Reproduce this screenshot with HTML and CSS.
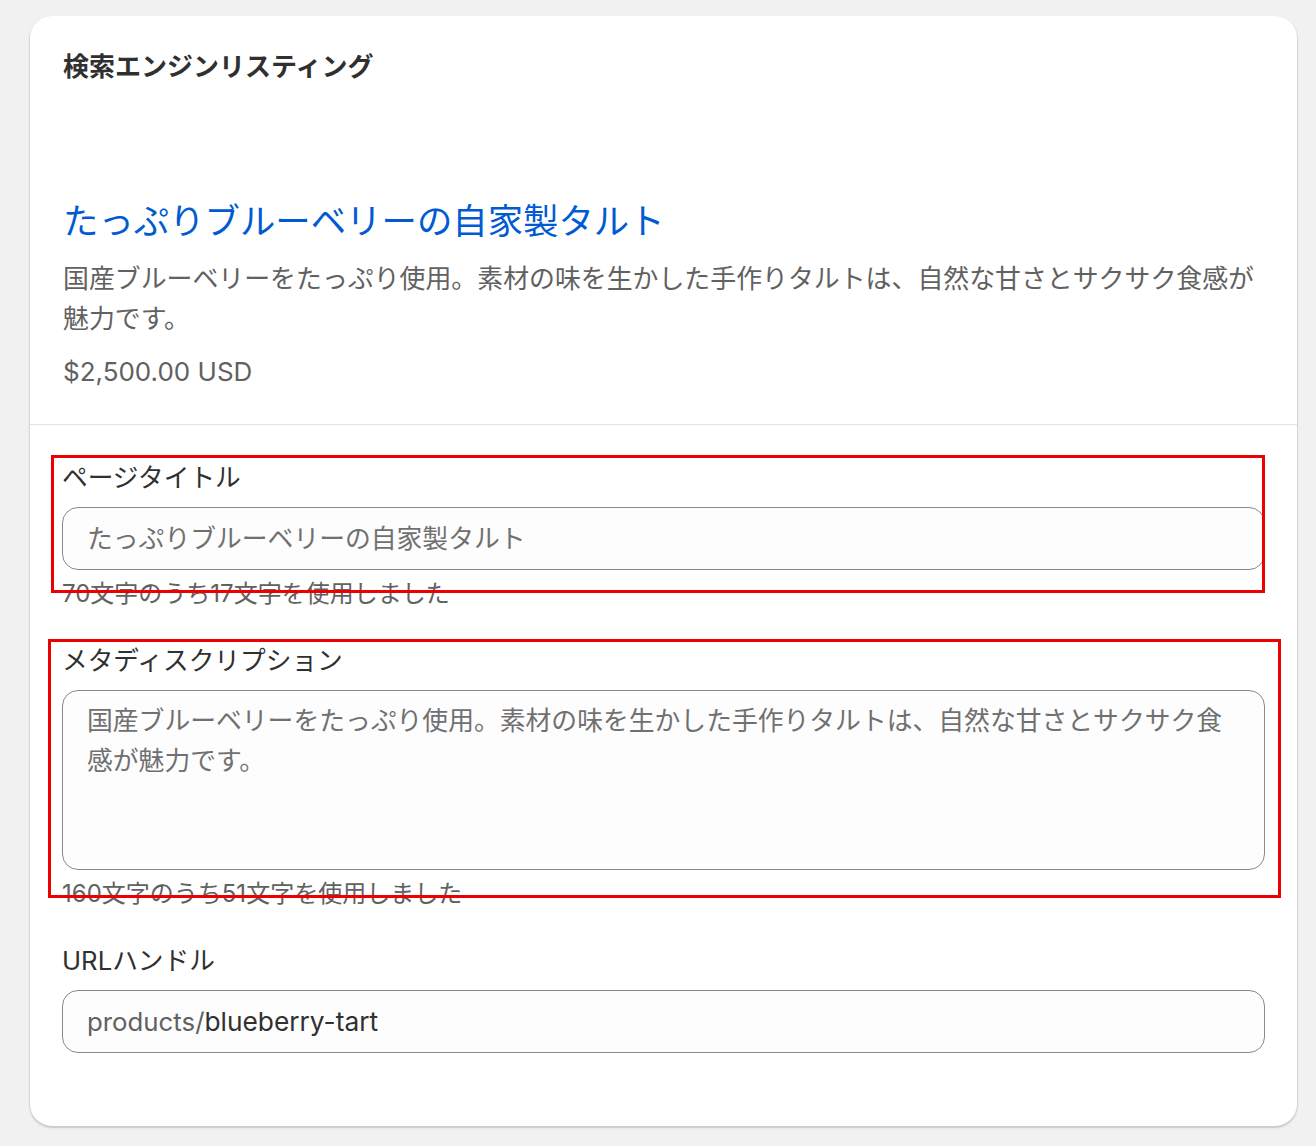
FILE: index.html
```html
<!DOCTYPE html>
<html lang="ja">
<head>
<meta charset="utf-8">
<title>検索エンジンリスティング</title>
<link rel="stylesheet" href="styles.css">
</head>
<body>
<div class="page">
  <div class="card">
    <div class="preview">
      <h2 class="card-title">検索エンジンリスティング</h2>
      <div class="serp">
        <div class="serp-title">たっぷりブルーベリーの自家製タルト</div>
        <p class="serp-desc">国産ブルーベリーをたっぷり使用。素材の味を生かした手作りタルトは、自然な甘さとサクサク食感が魅力です。</p>
        <div class="serp-price">$2,500.00 USD</div>
      </div>
    </div>
    <div class="form">
      <div class="field">
        <label class="label">ページタイトル</label>
        <div class="input"><span class="placeholder">たっぷりブルーベリーの自家製タルト</span></div>
        <div class="help">70文字のうち17文字を使用しました</div>
      </div>
      <div class="field">
        <label class="label">メタディスクリプション</label>
        <div class="input textarea"><span class="placeholder">国産ブルーベリーをたっぷり使用。素材の味を生かした手作りタルトは、自然な甘さとサクサク食感が魅力です。</span></div>
        <div class="help">160文字のうち51文字を使用しました</div>
      </div>
      <div class="field">
        <label class="label">URLハンドル</label>
        <div class="input"><span class="prefix">products/</span><span class="value">blueberry-tart</span></div>
      </div>
    </div>
  </div>
  <div class="mark mark-1"></div>
  <div class="mark mark-2"></div>
</div>
</body>
</html>
```

FILE: styles.css
```css
* { box-sizing: border-box; }
html, body {
  margin: 0;
  padding: 0;
  background: #f1f1f1;
}
body {
  font-family: "Inter", "Noto Sans CJK JP", sans-serif;
  color: #303030;
}
.page {
  position: relative;
  padding: 16px 19px 20px 30px;
}
.card {
  width: 1267px;
  height: 1110px;
  background: #ffffff;
  border-radius: 22px;
  box-shadow: 0 1px 0 1px rgba(0,0,0,0.07), 0 2px 3px rgba(0,0,0,0.10);
  overflow: hidden;
}
.preview {
  padding: 30px 32px 32px 33px;
  border-bottom: 1.5px solid #e3e3e3;
}
.card-title {
  margin: 0;
  font-size: 26px;
  line-height: 42px;
  font-weight: 700;
  color: #303030;
}
.serp {
  margin-top: 110px;
}
.serp-title {
  font-size: 35.4px;
  line-height: 48px;
  color: #005bd3;
}
.serp-desc {
  margin: 13px 0 0;
  font-size: 25.9px;
  line-height: 40px;
  color: #616161;
}
.serp-price {
  margin-top: 13px;
  font-size: 26px;
  line-height: 40px;
  color: #616161;
}
.form {
  padding: 33px 32px 0 32px;
  display: flex;
  flex-direction: column;
  gap: 30px;
}
.field {
  display: flex;
  flex-direction: column;
}
.label {
  font-size: 25.7px;
  line-height: 40px;
  color: #303030;
}
.input {
  margin-top: 9px;
  height: 63px;
  border: 1.5px solid #8a8a8a;
  border-radius: 16px;
  background: #fdfdfd;
  padding: 0 24px;
  display: flex;
  align-items: center;
  font-size: 25.8px;
  line-height: 40px;
}
.input.textarea {
  height: 180px;
  align-items: flex-start;
  padding-top: 10px;
}
.placeholder {
  color: #707070;
}
.prefix {
  color: #616161;
}
.value {
  color: #303030;
  font-size: 26.3px;
}
.help {
  margin-top: 7px;
  font-size: 24px;
  line-height: 34px;
  color: #616161;
}
.mark {
  position: absolute;
  border: 3px solid #ee0000;
  pointer-events: none;
}
.mark-1 {
  left: 51px;
  top: 455px;
  width: 1214px;
  height: 138px;
}
.mark-2 {
  left: 48px;
  top: 639px;
  width: 1233px;
  height: 259px;
}
```
